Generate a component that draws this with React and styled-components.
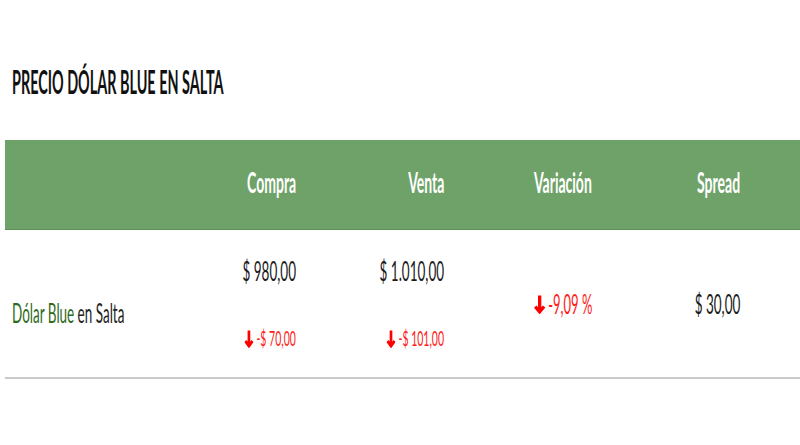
import React from "react";
import styled, { createGlobalStyle } from "styled-components";

/* the reference renders Lato squeezed horizontally, so every text run
   goes through <Squeeze> which condenses it around its aligned edge */
const SQUEEZE = 0.5;

const GlobalStyle = createGlobalStyle`
  html, body {
    margin: 0;
    padding: 0;
    background: #fff;
    overflow: hidden;
  }
  body {
    font-family: Lato, "Liberation Sans", sans-serif;
    color: #1b1b1b;
  }
`;

const Page = styled.div`
  width: 800px;
  height: 445px;
  padding: 60px 0 0 5px;
  box-sizing: border-box;
`;

const Title = styled.h2`
  margin: 0 0 0 7px;
  font-size: 32px;
  font-weight: 700;
  line-height: 44px;
  height: 80px;
  color: #111;
`;

const Squeeze = styled.span`
  display: inline-flex;
  align-items: center;
  white-space: nowrap;
  transform: scaleX(${(p) => p.$scale || SQUEEZE});
  transform-origin: ${(p) => p.$origin || "right"} center;
`;

const Row = styled.div`
  display: grid;
  grid-template-columns: 201px repeat(4, 148px);
  align-items: center;
  height: ${(p) => p.$height}px;
  background: ${(p) => (p.$head ? "#6fa269" : "transparent")};
  border-bottom: ${(p) => (p.$head ? "1px solid #5f9159" : "2px solid #cacaca")};
`;

const HeadCell = styled.div`
  display: flex;
  justify-content: flex-end;
  padding: 0 58px 6px 0;
  min-width: 0;
  font-size: 28px;
  font-weight: 700;
  color: #fff;
`;

const LabelCell = styled.div`
  padding-left: 7px;
  margin-top: 18px;
  font-size: 27px;
  color: #222;
`;

const BlueLink = styled.span`
  color: #2f6a1c;
  margin-right: 0.25em;
`;

const Cell = styled.div`
  display: flex;
  flex-direction: column;
  align-items: flex-end;
  gap: ${(p) => (p.$stack ? "40px" : "0")};
  padding-right: 58px;
  min-width: 0;
  margin-top: ${(p) => (p.$stack ? "-2px" : "0")};
`;

const Value = styled.div`
  display: flex;
  justify-content: flex-end;
  font-size: 27px;
  line-height: 30px;
  color: #1b1b1b;
`;

const Change = styled.div`
  display: flex;
  justify-content: flex-end;
  font-size: ${(p) => (p.$big ? "26px" : "21px")};
  line-height: ${(p) => (p.$big ? "30px" : "24px")};
  color: #ff1a1a;
`;

/* drawn at double width, since it sits inside the squeezed run */
const Arrow = ({ big }) => (
  <svg
    width={big ? 22 : 18}
    height={big ? 19 : 18}
    viewBox="0 0 10 18"
    preserveAspectRatio="none"
    style={{ flexShrink: 0, marginRight: 6, marginTop: big ? 1 : 3 }}
  >
    <path
      d="M5 0.5 V16 M1 11 L5 16 L9 11"
      fill="none"
      stroke="#f00"
      strokeWidth="3"
    />
  </svg>
);

const Down = ({ children, big }) => (
  <Change $big={big}>
    <Squeeze>
      <Arrow big={big} />
      {children}
    </Squeeze>
  </Change>
);

export default function App() {
  return (
    <>
      <GlobalStyle />
      <Page>
        <Title>
          <Squeeze $origin="left" $scale={0.45}>
            PRECIO DÓLAR BLUE EN SALTA
          </Squeeze>
        </Title>

        <Row $head $height={89}>
          <div />
          <HeadCell><Squeeze>Compra</Squeeze></HeadCell>
          <HeadCell><Squeeze>Venta</Squeeze></HeadCell>
          <HeadCell><Squeeze>Variación</Squeeze></HeadCell>
          <HeadCell><Squeeze>Spread</Squeeze></HeadCell>
        </Row>

        <Row $height={147}>
          <LabelCell>
            <Squeeze $origin="left">
              <BlueLink>Dólar Blue</BlueLink>en Salta
            </Squeeze>
          </LabelCell>
          <Cell $stack>
            <Value><Squeeze>$ 980,00</Squeeze></Value>
            <Down>-$ 70,00</Down>
          </Cell>
          <Cell $stack>
            <Value><Squeeze>$ 1.010,00</Squeeze></Value>
            <Down>-$ 101,00</Down>
          </Cell>
          <Cell>
            <Down big>-9,09 %</Down>
          </Cell>
          <Cell>
            <Value><Squeeze>$ 30,00</Squeeze></Value>
          </Cell>
        </Row>
      </Page>
    </>
  );
}
